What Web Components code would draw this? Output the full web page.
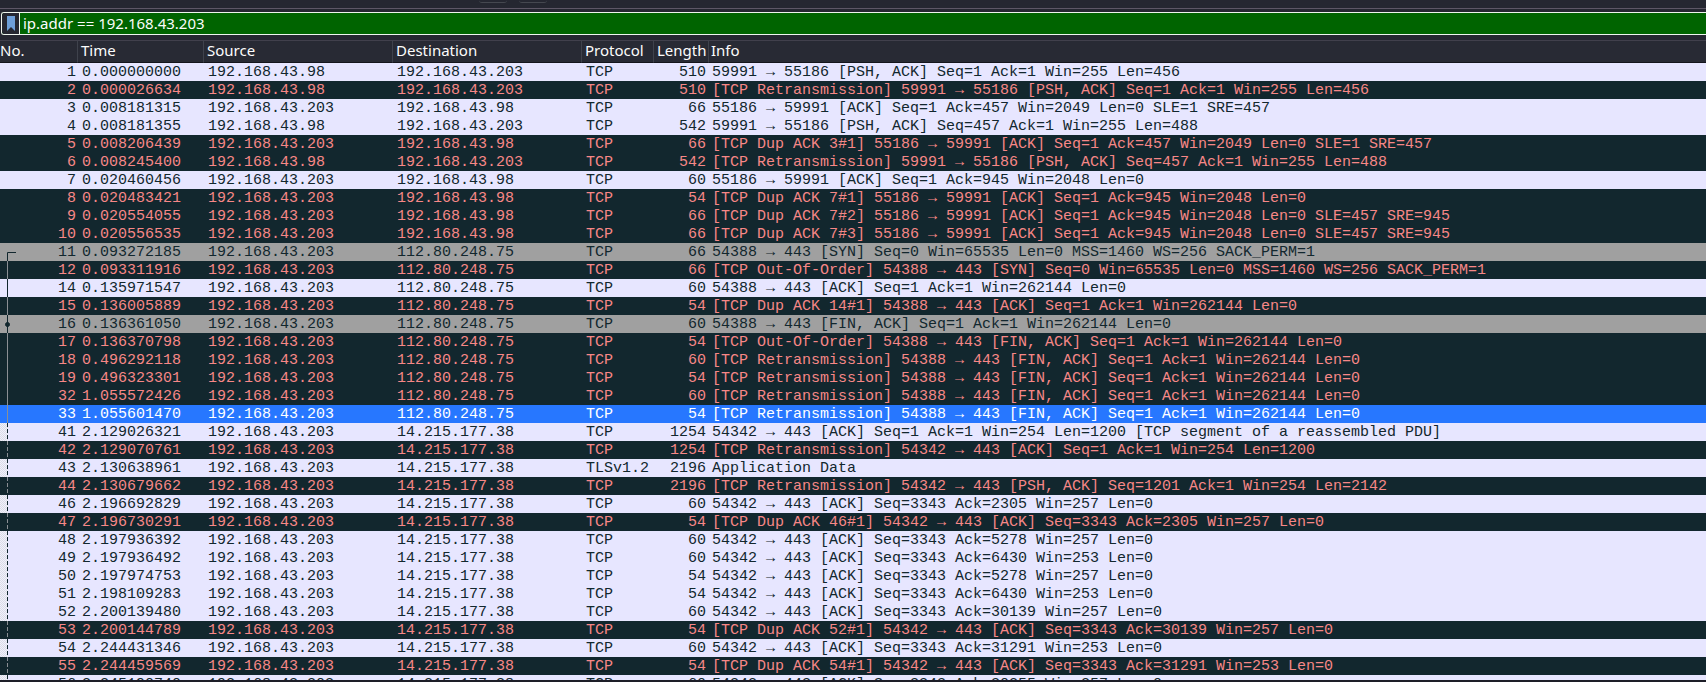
<!DOCTYPE html>
<html lang="en">
<head>
<meta charset="utf-8">
<title>Packet capture</title>
<style>
    html, body { height: 100%; }
    body { margin: 0; background: #252731; overflow: hidden; }
</style>
</head>
<body>
<capture-window>
    <tool-strip slot="toolbar"></tool-strip>
    <display-filter slot="filter" value="ip.addr == 192.168.43.203"></display-filter>
    <packet-list></packet-list>
</capture-window>

<script>
class CaptureWindow extends HTMLElement {
    constructor() {
        super();
        this.attachShadow({ mode: 'open' });
    }

    connectedCallback() {
        this.shadowRoot.innerHTML = `
            <style>
                :host {
                    display: flex;
                    flex-direction: column;
                    height: 100vh;
                    box-sizing: border-box;
                    border-bottom: 2px solid #1d1e28;
                    background: #252731;
                    color: #fcfcfc;
                    font-family: "Noto Sans", sans-serif;
                    font-size: 15px;
                }
                main {
                    flex: 1;
                    min-height: 0;
                    overflow: hidden;
                }
            </style>
            <slot name="toolbar"></slot>
            <slot name="filter"></slot>
            <main><slot></slot></main>
        `;
    }
}

class ToolStrip extends HTMLElement {
    constructor() {
        super();
        this.attachShadow({ mode: 'open' });
    }

    connectedCallback() {
        this.shadowRoot.innerHTML = `
            <style>
                :host {
                    display: flex;
                    gap: 12px;
                    height: 8px;
                    padding-left: 479px;
                    border-bottom: 1px solid #5d5766;
                }
                i {
                    width: 28px;
                    height: 2px;
                    border-bottom: 1px solid #454850;
                    border-radius: 0 0 3px 3px;
                }
            </style>
            <i></i><i></i>
        `;
    }
}

class DisplayFilter extends HTMLElement {
    constructor() {
        super();
        this.attachShadow({ mode: 'open' });
    }

    connectedCallback() {
        this.shadowRoot.innerHTML = `
            <style>
                :host {
                    display: block;
                    padding: 3px 0 5px 1px;
                }
                .box {
                    display: flex;
                    height: 21px;
                    border: 1px solid #eef5ee;
                    border-right: 0;
                    border-radius: 3px 0 0 3px;
                    background: #006400;
                    overflow: hidden;
                }
                button {
                    display: flex;
                    align-items: center;
                    justify-content: center;
                    width: 18px;
                    padding: 0;
                    border: 0;
                    border-right: 1px solid #eef5ee;
                    background: #252731;
                }
                input {
                    flex: 1;
                    min-width: 0;
                    padding: 0 3px 2px;
                    border: 0;
                    outline: 0;
                    background: transparent;
                    color: #fcfcfc;
                    font: inherit;
                }
            </style>
            <div class="box">
                <button aria-label="Filter bookmarks">
                    <svg width="8" height="15" viewBox="0 0 8 15"><path d="M0 0h8v15l-4-4-4 4z" fill="#6d9fd8"/></svg>
                </button>
                <input type="text" aria-label="Display filter" value="${this.getAttribute('value')}">
            </div>
        `;
    }
}

const ME = '192.168.43.203';
const PEER = '192.168.43.98';
const WEB = '112.80.248.75';
const TLS = '14.215.177.38';

// kind, related-packet mark, no, time, source, destination, protocol, length, info
const PACKETS = [
    ['tcp', '', 1, '0.000000000', PEER, ME, 'TCP', 510, '59991 → 55186 [PSH, ACK] Seq=1 Ack=1 Win=255 Len=456'],
    ['bad', '', 2, '0.000026634', PEER, ME, 'TCP', 510, '[TCP Retransmission] 59991 → 55186 [PSH, ACK] Seq=1 Ack=1 Win=255 Len=456'],
    ['tcp', '', 3, '0.008181315', ME, PEER, 'TCP', 66, '55186 → 59991 [ACK] Seq=1 Ack=457 Win=2049 Len=0 SLE=1 SRE=457'],
    ['tcp', '', 4, '0.008181355', PEER, ME, 'TCP', 542, '59991 → 55186 [PSH, ACK] Seq=457 Ack=1 Win=255 Len=488'],
    ['bad', '', 5, '0.008206439', ME, PEER, 'TCP', 66, '[TCP Dup ACK 3#1] 55186 → 59991 [ACK] Seq=1 Ack=457 Win=2049 Len=0 SLE=1 SRE=457'],
    ['bad', '', 6, '0.008245400', PEER, ME, 'TCP', 542, '[TCP Retransmission] 59991 → 55186 [PSH, ACK] Seq=457 Ack=1 Win=255 Len=488'],
    ['tcp', '', 7, '0.020460456', ME, PEER, 'TCP', 60, '55186 → 59991 [ACK] Seq=1 Ack=945 Win=2048 Len=0'],
    ['bad', '', 8, '0.020483421', ME, PEER, 'TCP', 54, '[TCP Dup ACK 7#1] 55186 → 59991 [ACK] Seq=1 Ack=945 Win=2048 Len=0'],
    ['bad', '', 9, '0.020554055', ME, PEER, 'TCP', 66, '[TCP Dup ACK 7#2] 55186 → 59991 [ACK] Seq=1 Ack=945 Win=2048 Len=0 SLE=457 SRE=945'],
    ['bad', '', 10, '0.020556535', ME, PEER, 'TCP', 66, '[TCP Dup ACK 7#3] 55186 → 59991 [ACK] Seq=1 Ack=945 Win=2048 Len=0 SLE=457 SRE=945'],
    ['syn', 'first', 11, '0.093272185', ME, WEB, 'TCP', 66, '54388 → 443 [SYN] Seq=0 Win=65535 Len=0 MSS=1460 WS=256 SACK_PERM=1'],
    ['bad', 'line', 12, '0.093311916', ME, WEB, 'TCP', 66, '[TCP Out-Of-Order] 54388 → 443 [SYN] Seq=0 Win=65535 Len=0 MSS=1460 WS=256 SACK_PERM=1'],
    ['tcp', 'line', 14, '0.135971547', ME, WEB, 'TCP', 60, '54388 → 443 [ACK] Seq=1 Ack=1 Win=262144 Len=0'],
    ['bad', 'line', 15, '0.136005889', ME, WEB, 'TCP', 54, '[TCP Dup ACK 14#1] 54388 → 443 [ACK] Seq=1 Ack=1 Win=262144 Len=0'],
    ['syn', 'dot', 16, '0.136361050', ME, WEB, 'TCP', 60, '54388 → 443 [FIN, ACK] Seq=1 Ack=1 Win=262144 Len=0'],
    ['bad', 'line', 17, '0.136370798', ME, WEB, 'TCP', 54, '[TCP Out-Of-Order] 54388 → 443 [FIN, ACK] Seq=1 Ack=1 Win=262144 Len=0'],
    ['bad', 'line', 18, '0.496292118', ME, WEB, 'TCP', 60, '[TCP Retransmission] 54388 → 443 [FIN, ACK] Seq=1 Ack=1 Win=262144 Len=0'],
    ['bad', 'line', 19, '0.496323301', ME, WEB, 'TCP', 54, '[TCP Retransmission] 54388 → 443 [FIN, ACK] Seq=1 Ack=1 Win=262144 Len=0'],
    ['bad', 'line', 32, '1.055572426', ME, WEB, 'TCP', 60, '[TCP Retransmission] 54388 → 443 [FIN, ACK] Seq=1 Ack=1 Win=262144 Len=0'],
    ['selected', 'line', 33, '1.055601470', ME, WEB, 'TCP', 54, '[TCP Retransmission] 54388 → 443 [FIN, ACK] Seq=1 Ack=1 Win=262144 Len=0'],
    ['tcp', 'dash', 41, '2.129026321', ME, TLS, 'TCP', 1254, '54342 → 443 [ACK] Seq=1 Ack=1 Win=254 Len=1200 [TCP segment of a reassembled PDU]'],
    ['bad', 'dash', 42, '2.129070761', ME, TLS, 'TCP', 1254, '[TCP Retransmission] 54342 → 443 [ACK] Seq=1 Ack=1 Win=254 Len=1200'],
    ['tcp', 'dash', 43, '2.130638961', ME, TLS, 'TLSv1.2', 2196, 'Application Data'],
    ['bad', 'dash', 44, '2.130679662', ME, TLS, 'TCP', 2196, '[TCP Retransmission] 54342 → 443 [PSH, ACK] Seq=1201 Ack=1 Win=254 Len=2142'],
    ['tcp', 'dash', 46, '2.196692829', ME, TLS, 'TCP', 60, '54342 → 443 [ACK] Seq=3343 Ack=2305 Win=257 Len=0'],
    ['bad', 'dash', 47, '2.196730291', ME, TLS, 'TCP', 54, '[TCP Dup ACK 46#1] 54342 → 443 [ACK] Seq=3343 Ack=2305 Win=257 Len=0'],
    ['tcp', 'dash', 48, '2.197936392', ME, TLS, 'TCP', 60, '54342 → 443 [ACK] Seq=3343 Ack=5278 Win=257 Len=0'],
    ['tcp', 'dash', 49, '2.197936492', ME, TLS, 'TCP', 60, '54342 → 443 [ACK] Seq=3343 Ack=6430 Win=253 Len=0'],
    ['tcp', 'dash', 50, '2.197974753', ME, TLS, 'TCP', 54, '54342 → 443 [ACK] Seq=3343 Ack=5278 Win=257 Len=0'],
    ['tcp', 'dash', 51, '2.198109283', ME, TLS, 'TCP', 54, '54342 → 443 [ACK] Seq=3343 Ack=6430 Win=253 Len=0'],
    ['tcp', 'dash', 52, '2.200139480', ME, TLS, 'TCP', 60, '54342 → 443 [ACK] Seq=3343 Ack=30139 Win=257 Len=0'],
    ['bad', 'dash', 53, '2.200144789', ME, TLS, 'TCP', 54, '[TCP Dup ACK 52#1] 54342 → 443 [ACK] Seq=3343 Ack=30139 Win=257 Len=0'],
    ['tcp', 'dash', 54, '2.244431346', ME, TLS, 'TCP', 60, '54342 → 443 [ACK] Seq=3343 Ack=31291 Win=253 Len=0'],
    ['bad', 'dash', 55, '2.244459569', ME, TLS, 'TCP', 54, '[TCP Dup ACK 54#1] 54342 → 443 [ACK] Seq=3343 Ack=31291 Win=253 Len=0'],
    ['tcp', 'dash', 56, '2.245190740', ME, TLS, 'TCP', 60, '54342 → 443 [ACK] Seq=3343 Ack=30255 Win=257 Len=0'],
];

const MARKS = {
    first: '<path d="M16 9.5H7.5V18"/>',
    line: '<path d="M7.5 0V18"/>',
    dot: '<path d="M7.5 0V18"/><circle cx="7.5" cy="9.5" r="2"/>',
    dash: '<path d="M7.5 0V18" stroke-dasharray="4 2"/>',
};

class PacketList extends HTMLElement {
    constructor() {
        super();
        this.attachShadow({ mode: 'open' });
    }

    row([kind, mark, no, time, source, destination, protocol, length, info]) {
        const svg = mark ? `<svg width="18" height="18" aria-hidden="true">${MARKS[mark]}</svg>` : '';
        return `
            <tr class="${kind} ${mark}">
                <td><div class="no">${svg}<span>${no}</span></div></td>
                <td>${time}</td><td>${source}</td><td>${destination}</td>
                <td>${protocol}</td><td class="num">${length}</td><td class="info">${info}</td>
            </tr>`;
    }

    connectedCallback() {
        this.shadowRoot.innerHTML = `
            <style>
                :host {
                    display: block;
                }
                table {
                    width: 100%;
                    table-layout: fixed;
                    border-collapse: separate;
                    border-spacing: 0;
                }
                th {
                    height: 23px;
                    box-sizing: border-box;
                    padding: 0 0 2px 3px;
                    border-top: 1px solid #41404c;
                    border-bottom: 1px solid #14151c;
                    border-right: 1px solid #3f424c;
                    background: #282a34;
                    font-weight: 400;
                    line-height: 19px;
                    text-align: left;
                }
                th:first-child { padding-left: 0; }
                th:last-child { border-right: 0; padding-left: 2px; }
                td {
                    height: 18px;
                    box-sizing: border-box;
                    padding: 2px 0 0 4px;
                    font: 15px/16px "Liberation Mono", monospace;
                    white-space: pre;
                    overflow: hidden;
                }
                td:first-child { padding: 0; }
                td.num { padding: 2px 3px 0 0; text-align: right; }
                td.info { padding-left: 3px; }
                .no {
                    display: flex;
                    height: 18px;
                    padding-right: 2px;
                }
                .no span {
                    margin-left: auto;
                    padding-top: 2px;
                }
                svg {
                    fill: none;
                    stroke: currentColor;
                    stroke-width: 1;
                }
                circle { fill: currentColor; }
                .tcp { background: #e7e6ff; color: #12272e; }
                .bad { background: #12272e; color: #f78787; }
                .syn { background: #a0a0a0; color: #12272e; }
                .selected { background: #2777ff; color: #ffffff; }
                .bad svg, .selected svg { color: #8b8f94; }
                /* dotted gutter left of the conversation line */
                .tcp.dash td:first-child {
                    background: repeating-conic-gradient(#dcdde8 0 25%, #f0f0fa 0 50%) 0 0 / 2px 2px;
                }
                .tcp.dash .no { background: linear-gradient(#e7e6ff, #e7e6ff) 8px 0 no-repeat; }
            </style>
            <table>
                <colgroup>
                    <col style="width: 78px"><col style="width: 126px"><col style="width: 189px"><col style="width: 189px">
                    <col style="width: 72px"><col style="width: 55px"><col>
                </colgroup>
                <thead>
                    <tr><th>No.</th><th>Time</th><th>Source</th><th>Destination</th><th>Protocol</th><th>Length</th><th>Info</th></tr>
                </thead>
                <tbody>${PACKETS.map(p => this.row(p)).join('')}</tbody>
            </table>
        `;
    }
}

customElements.define('capture-window', CaptureWindow);
customElements.define('tool-strip', ToolStrip);
customElements.define('display-filter', DisplayFilter);
customElements.define('packet-list', PacketList);
</script>
</body>
</html>
